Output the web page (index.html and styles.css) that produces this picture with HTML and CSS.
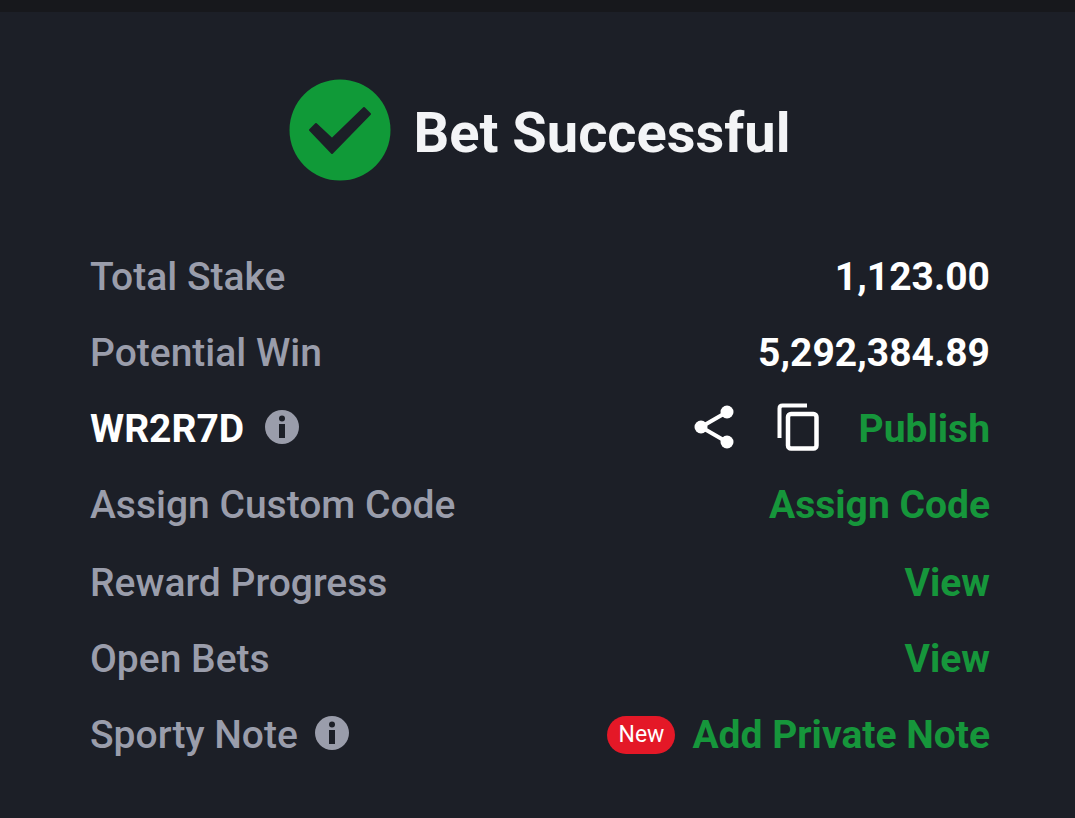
FILE: index.html
```html
<!DOCTYPE html>
<html lang="en">
<head>
    <meta charset="UTF-8">
    <meta name="viewport" content="width=device-width, initial-scale=1.0">
    <title>Bet Successful</title>
    <link rel="stylesheet" href="styles.css">
</head>
<body>
    <main class="container">
        <header class="title">
            <svg class="check" viewBox="0 0 102 102" aria-hidden="true">
                <circle cx="51" cy="51" r="50.5" fill="#109a38"/>
                <path d="M27 45 43 60 75 29 81 35 43 74 21 51Z" fill="#1c1f27" stroke="#1c1f27" stroke-width="2" stroke-linejoin="round"/>
            </svg>
            <h1>Bet Successful</h1>
        </header>

        <section class="rows">
            <div class="row">
                <span class="label">Total Stake</span>
                <span class="value">1,123.00</span>
            </div>
            <div class="row">
                <span class="label">Potential Win</span>
                <span class="value">5,292,384.89</span>
            </div>
            <div class="row">
                <span class="code">WR2R7D</span>
                <button class="info code-info" aria-label="About booking code">
                    <svg viewBox="0 0 36 36">
                        <circle cx="18" cy="18" r="17" fill="#9a9dab"/>
                        <circle cx="18" cy="9.500" r="3" fill="#1c1f27"/>
                        <path d="M15 15h6v14h-6z" fill="#1c1f27"/>
                    </svg>
                </button>
                <div class="actions">
                    <button class="icon share" aria-label="Share">
                        <svg viewBox="0 0 40 44">
                            <path d="M33 7 7 22 33 37" fill="none" stroke="#fff" stroke-width="4"/>
                            <circle cx="33" cy="7" r="6.500" fill="#fff"/>
                            <circle cx="7" cy="22" r="6.500" fill="#fff"/>
                            <circle cx="33" cy="37" r="6.500" fill="#fff"/>
                        </svg>
                    </button>
                    <button class="icon copy" aria-label="Copy">
                        <svg viewBox="0 0 42 48">
                            <path d="M30 2.500H5.500Q2.500 2.500 2.500 5.500V35" fill="none" stroke="#fff" stroke-width="4"/>
                            <rect x="11" y="11" width="28.500" height="34.500" rx="3" fill="none" stroke="#fff" stroke-width="4.500"/>
                        </svg>
                    </button>
                    <button class="action">Publish</button>
                </div>
            </div>
            <div class="row">
                <span class="label">Assign Custom Code</span>
                <button class="action">Assign Code</button>
            </div>
        </section>

        <section class="rows more">
            <div class="row">
                <span class="label">Reward Progress</span>
                <a class="action" href="#">View</a>
            </div>
            <div class="row">
                <span class="label">Open Bets</span>
                <a class="action" href="#">View</a>
            </div>
            <div class="row">
                <span class="label">Sporty Note</span>
                <button class="info" aria-label="About Sporty Note">
                    <svg viewBox="0 0 36 36">
                        <circle cx="18" cy="18" r="17" fill="#9a9dab"/>
                        <circle cx="18" cy="9.500" r="3" fill="#1c1f27"/>
                        <path d="M15 15h6v14h-6z" fill="#1c1f27"/>
                    </svg>
                </button>
                <span class="badge">New</span>
                <button class="action">Add Private Note</button>
            </div>
        </section>
    </main>
</body>
</html>
```
FILE: styles.css
```css
* {
    box-sizing: border-box;
}

body {
    margin: 0;
    min-height: 100vh;
    border-top: 12px solid #17181c;
    background-color: #1c1f27;
    color: #fff;
    font-family: Roboto, sans-serif;
    font-size: 39px;
    line-height: 76px;
}

.container {
    padding: 67px 85px 40px 90px;
}

.title {
    display: flex;
    align-items: center;
    justify-content: center;
    gap: 22px;
    margin-bottom: 58px;
}

.check {
    width: 102px;
    height: 102px;
}

h1 {
    margin: 0;
    padding-top: 6px;
    color: #f3f4f6;
    font-size: 56px;
    font-weight: 700;
}

.row {
    display: flex;
    align-items: center;
    height: 76px;
}

.more {
    margin-top: 2px;
}

.label {
    color: #9a9dab;
    font-weight: 500;
}

.value {
    margin-left: auto;
    font-weight: 700;
}

.code {
    font-weight: 700;
}

button {
    padding: 0;
    border: none;
    background: none;
    color: inherit;
    font: inherit;
    cursor: pointer;
}

svg {
    display: block;
}

.info {
    width: 36px;
    height: 36px;
    margin: 0 auto 4px 16px;
}

.code-info {
    margin-left: 20px;
}

.actions {
    display: flex;
    align-items: center;
}

.icon {
    margin-bottom: 4px;
}

.share {
    width: 40px;
    margin-right: 43px;
}

.copy {
    width: 42px;
    margin-right: 40px;
}

.action {
    margin-left: auto;
    color: #16963b;
    font-weight: 700;
    text-decoration: none;
}

.badge {
    margin-right: 17px;
    padding: 0 11px;
    border-radius: 19px;
    background-color: #e41827;
    font-size: 23px;
    line-height: 38px;
}

.badge + .action {
    margin-left: 0;
}

@media (max-width: 800px) {
    .container {
        padding: 40px 20px;
    }

    body {
        font-size: 20px;
    }

    h1 {
        font-size: 32px;
    }
}
```
